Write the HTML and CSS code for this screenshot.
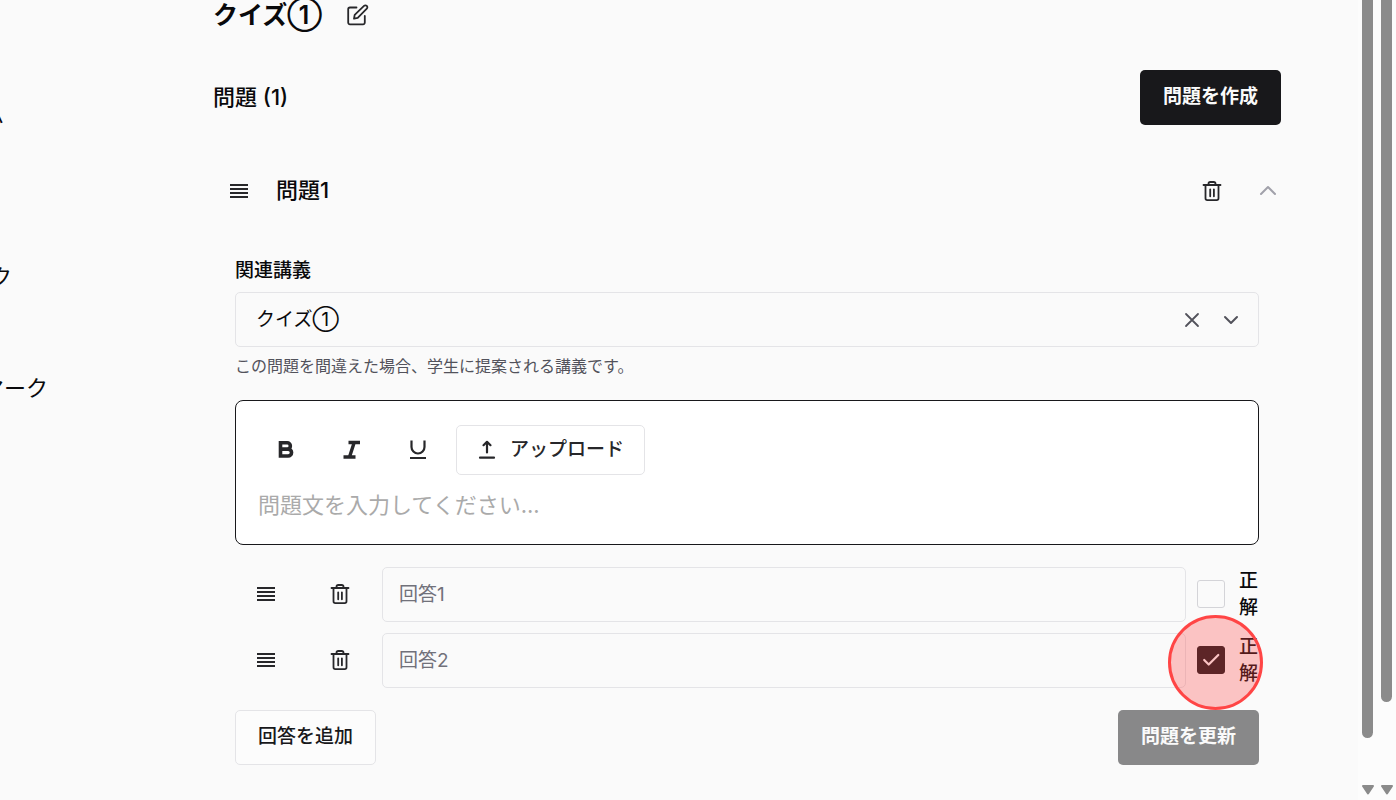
FILE: index.html
```html
<!DOCTYPE html>
<html lang="ja">

<head>
    <meta charset="UTF-8">
    <meta name="viewport" content="width=device-width, initial-scale=1.0">
    <title>クイズ①</title>
    <link rel="stylesheet" href="styles.css">
</head>

<body>
    <svg class="symbols" aria-hidden="true">
        <symbol id="icon-handle" viewBox="0 0 22 22">
            <path d="M2 5h18M2 9h18M2 13h18M2 17h18" stroke-width="1.8" stroke-linecap="butt" />
        </symbol>
        <symbol id="icon-trash" viewBox="0 0 22 22">
            <path d="M2.5 5h17M4.5 5v13.3a1.8 1.8 0 0 0 1.8 1.8h9.4a1.8 1.8 0 0 0 1.8-1.8V5M7.5 5V3.8A1.8 1.8 0 0 1 9.3 2h3.4a1.8 1.8 0 0 1 1.8 1.8V5M9.2 9.3v7M12.9 9.3v7" stroke-width="1.8" />
        </symbol>
    </svg>

    <div class="layout">
        <nav class="sidebar">
            <a href="#">ム</a>
            <a href="#" class="nested">ク</a>
            <a href="#">マーク</a>
        </nav>

        <main class="content">
            <header class="title-row">
                <h1>クイズ①</h1>
                <button type="button" class="icon-button" aria-label="編集">
                    <svg class="icon" viewBox="0 0 22 22">
                        <path d="M9.5 3.5H3a1.8 1.8 0 0 0-1.8 1.8v13.2A1.8 1.8 0 0 0 3 20.3h13a1.8 1.8 0 0 0 1.8-1.8V12M7 14.7l.7-3.9 9.3-8.9a1.9 1.9 0 0 1 2.8 2.8l-9.1 9.1z" stroke-width="1.8" />
                    </svg>
                </button>
            </header>

            <div class="section-row">
                <h2>問題 (1)</h2>
                <button type="button" class="button primary">問題を作成</button>
            </div>

            <section class="question">
                <div class="question-header">
                    <button type="button" class="icon-button drag" aria-label="並べ替え"><svg class="icon"><use href="#icon-handle" /></svg></button>
                    <h3>問題1</h3>
                    <button type="button" class="icon-button" aria-label="問題を削除"><svg class="icon"><use href="#icon-trash" /></svg></button>
                    <button type="button" class="icon-button collapse" aria-label="閉じる">
                        <svg class="icon" viewBox="0 0 22 22"><path d="M4 14l7-7 7 7" stroke-width="2" /></svg>
                    </button>
                </div>

                <form class="question-form">
                    <div class="field">
                        <label for="lecture">関連講義</label>
                        <div class="select-box">
                            <select id="lecture">
                                <option>クイズ①</option>
                            </select>
                            <div class="select-icons">
                                <button type="button" class="icon-button" aria-label="クリア">
                                    <svg class="icon" viewBox="0 0 22 22"><path d="M5 5l12 12M17 5L5 17" stroke-width="1.8" /></svg>
                                </button>
                                <svg class="icon" viewBox="0 0 22 22"><path d="M5 8l6 6 6-6" stroke-width="2" /></svg>
                            </div>
                        </div>
                        <p class="hint">この問題を間違えた場合、学生に提案される講義です。</p>
                    </div>

                    <div class="editor">
                        <div class="toolbar">
                            <button type="button" class="tool" aria-label="太字">
                                <svg class="icon" viewBox="0 0 22 22"><path d="M5.5 3.8h6.7a3.1 3.1 0 0 1 0 6.3H5.5zM5.5 10.1h7.6a3.4 3.4 0 0 1 0 6.9H5.5z" stroke-width="3.6" stroke-linejoin="miter" /></svg>
                            </button>
                            <button type="button" class="tool" aria-label="斜体">
                                <svg class="icon thick" viewBox="0 0 22 22"><path d="M7.5 3.5h11.5M2.5 18h12M13.2 3.5L8.5 18" stroke-width="3.4" /></svg>
                            </button>
                            <button type="button" class="tool" aria-label="下線">
                                <svg class="icon thick" viewBox="0 0 22 22"><path d="M4.5 1.5V8a6.5 6.5 0 0 0 13 0V1.5M3 19h16" stroke-width="2.2" /></svg>
                            </button>
                            <button type="button" class="tool upload">
                                <svg class="icon" viewBox="0 0 22 22"><path d="M11 13.5V3M7.5 6.2L11 2.8l3.5 3.4M4 18.7h14" stroke-width="2.2" /></svg>
                                アップロード
                            </button>
                        </div>
                        <textarea rows="1" aria-label="問題文" placeholder="問題文を入力してください..."></textarea>
                    </div>

                    <div class="answers">
                        <div class="answer">
                            <button type="button" class="icon-button" aria-label="並べ替え"><svg class="icon"><use href="#icon-handle" /></svg></button>
                            <button type="button" class="icon-button" aria-label="回答を削除"><svg class="icon"><use href="#icon-trash" /></svg></button>
                            <input type="text" aria-label="回答1" placeholder="回答1">
                            <span class="check">
                                <input type="checkbox" id="correct1">
                            </span>
                            <label for="correct1">正解</label>
                        </div>
                        <div class="answer">
                            <button type="button" class="icon-button" aria-label="並べ替え"><svg class="icon"><use href="#icon-handle" /></svg></button>
                            <button type="button" class="icon-button" aria-label="回答を削除"><svg class="icon"><use href="#icon-trash" /></svg></button>
                            <input type="text" aria-label="回答2" placeholder="回答2">
                            <span class="check">
                                <input type="checkbox" id="correct2" checked>
                                <svg class="icon" viewBox="0 0 22 22"><path d="M3.5 11l5 5L19 5.5" stroke-width="2.4" /></svg>
                                <span class="click-ring"></span>
                            </span>
                            <label for="correct2">正解</label>
                        </div>
                    </div>

                    <div class="form-footer">
                        <button type="button" class="button outline">回答を追加</button>
                        <button type="submit" class="button primary" disabled>問題を更新</button>
                    </div>
                </form>
            </section>
        </main>

        <div class="scrollbars" aria-hidden="true">
            <div class="track">
                <div class="thumb inner"></div>
                <svg class="arrow" viewBox="0 0 12 10"><path d="M1 1h10L6 8.5z" /></svg>
            </div>
            <div class="track">
                <div class="thumb outer"></div>
                <svg class="arrow" viewBox="0 0 12 10"><path d="M1 1h10L6 8.5z" /></svg>
            </div>
        </div>
    </div>
</body>

</html>
```

FILE: styles.css
```css
* {
    box-sizing: border-box;
}
body {
    margin: 0;
    font-family: Inter, "Noto Sans CJK JP", sans-serif;
    font-size: 19px;
    line-height: 27px;
    color: #09090b;
    background-color: #fafafa;
}
h1, h2, h3, p {
    margin: 0;
}
button, input, select, textarea {
    font: inherit;
    color: inherit;
    margin: 0;
}
button {
    cursor: pointer;
}
.symbols {
    display: none;
}
.icon {
    display: block;
    flex: none;
    width: 22px;
    height: 22px;
    fill: none;
    stroke: currentColor;
    stroke-linecap: round;
    stroke-linejoin: round;
}
.icon-button {
    display: flex;
    align-items: center;
    justify-content: center;
    padding: 0;
    border: none;
    background: none;
    color: #27272a;
}
.layout {
    display: flex;
    height: 100vh;
    overflow: hidden;
}

/* sidebar */
.sidebar {
    flex: none;
    width: 168px;
    margin-left: -18px;
    padding-top: 98px;
    display: flex;
    flex-direction: column;
    font-size: 22px;
    line-height: 33px;
}
.sidebar a {
    color: inherit;
    text-decoration: none;
    margin-bottom: 78px;
}
.sidebar .nested {
    margin-top: 52px;
    padding-left: 8px;
}

/* content */
.content {
    flex: 1;
    min-width: 0;
    padding: 0 77px 0 63px;
}
.title-row {
    display: flex;
    align-items: center;
    gap: 25px;
    margin-bottom: 40px;
}
h1 {
    font-size: 25px;
    line-height: 30px;
    font-weight: 600;
}
h2, h3 {
    font-size: 22px;
    line-height: 33px;
    font-weight: 500;
}
.section-row {
    display: flex;
    align-items: center;
    justify-content: space-between;
}
.button {
    height: 55px;
    padding: 0 22px 2px;
    border: 1px solid transparent;
    border-radius: 5px;
    font-weight: 500;
}
.primary {
    background-color: #18181b;
    color: #fafafa;
    font-weight: 600;
}
.primary:disabled {
    opacity: 0.5;
}
.outline {
    background-color: #fcfcfc;
    border-color: #e4e4e7;
    color: #18181b;
}

/* question */
.question-header {
    display: flex;
    align-items: center;
    height: 55px;
    margin: 38px 0 39px;
}
.question-header h3 {
    flex: 1;
}
.drag {
    width: 52px;
    margin-right: 11px;
}
.collapse {
    margin: 0 2px 0 34px;
    color: #a1a1aa;
}
.question-form {
    display: flex;
    flex-direction: column;
    gap: 22px;
    padding: 0 22px;
}
.field {
    display: flex;
    flex-direction: column;
    gap: 8px;
}
.field label {
    font-weight: 500;
}
.select-box {
    position: relative;
}
.select-box select {
    display: block;
    width: 100%;
    height: 55px;
    padding: 0 20px;
    border: 1px solid #e4e4e7;
    border-radius: 5px;
    background-color: transparent;
    appearance: none;
}
.select-icons {
    position: absolute;
    top: 0;
    bottom: 0;
    right: 17px;
    display: flex;
    align-items: center;
    gap: 17px;
    color: #52525b;
    pointer-events: none;
}
.select-icons .icon-button {
    color: inherit;
    pointer-events: auto;
}
.hint {
    font-size: 16px;
    line-height: 23px;
    color: #52525b;
}

/* editor */
.editor {
    padding: 24px 22px 22px;
    border: 1px solid #18181b;
    border-radius: 8px;
    background-color: #fff;
}
.toolbar {
    display: flex;
    gap: 11px;
    margin-bottom: 14px;
}
.tool {
    display: flex;
    align-items: center;
    justify-content: center;
    width: 55px;
    height: 50px;
    padding: 0;
    border: none;
    background: none;
    color: #27272a;
}
.thick {
    stroke-linecap: butt;
}
.upload {
    width: auto;
    gap: 12px;
    padding: 0 20px 2px 19px;
    border: 1px solid #e4e4e7;
    border-radius: 5px;
    font-weight: 500;
}
.upload .icon {
    margin-top: 2px;
}
.editor textarea {
    display: block;
    width: 100%;
    height: 33px;
    padding: 0;
    border: none;
    outline: none;
    resize: none;
    overflow: hidden;
    background: none;
    font-size: 22px;
    line-height: 33px;
}
.editor textarea::placeholder {
    color: #aaa;
}

/* answers */
.answers {
    display: flex;
    flex-direction: column;
    gap: 11px;
}
.answer {
    display: flex;
    align-items: center;
    height: 55px;
    padding-bottom: 1px;
}
.answer .icon-button {
    flex: none;
    width: 62px;
    height: 54px;
    margin-right: 11px;
}
.answer .icon-button + .icon-button {
    width: 63px;
}
.answer input[type="text"] {
    flex: 1;
    align-self: flex-start;
    min-width: 0;
    height: 55px;
    padding: 0 16px;
    border: 1px solid #e4e4e7;
    border-radius: 5px;
    background: transparent;
}
.answer input::placeholder {
    color: #71717a;
}
.check {
    position: relative;
    display: grid;
    place-items: center;
    margin: 0 14px 0 11px;
}
.check input {
    width: 28px;
    height: 28px;
    border: 1px solid #d4d4d8;
    border-radius: 3px;
    appearance: none;
}
.check input:checked {
    background-color: #18181b;
    border-color: #18181b;
}
.check input, .check .icon {
    grid-area: 1 / 1;
}
.check .icon {
    width: 20px;
    height: 20px;
    color: #fafafa;
    pointer-events: none;
}
.click-ring {
    position: absolute;
    z-index: 1;
    top: -31px;
    left: -29px;
    width: 95px;
    height: 95px;
    border: 3px solid #ff4545;
    border-radius: 50%;
    background-color: rgba(255, 70, 70, 0.3);
    pointer-events: none;
}
.answer label {
    width: 20px;
    font-weight: 500;
}
.form-footer {
    display: flex;
    justify-content: space-between;
}

/* scrollbars */
.scrollbars {
    flex: none;
    display: flex;
    background-color: #fcfcfc;
}
.track {
    display: flex;
    flex-direction: column;
    justify-content: space-between;
    align-items: center;
    width: 19px;
    padding-bottom: 5px;
}
.thumb {
    width: 11px;
    border-radius: 0 0 6px 6px;
    background-color: #8b8b8b;
}
.thumb.inner {
    height: calc(100vh - 62px);
}
.thumb.outer {
    height: calc(100vh - 98px);
}
.arrow {
    width: 12px;
    height: 10px;
    fill: #8b8b8b;
    stroke: #8b8b8b;
    stroke-width: 2;
    stroke-linejoin: round;
}
```
